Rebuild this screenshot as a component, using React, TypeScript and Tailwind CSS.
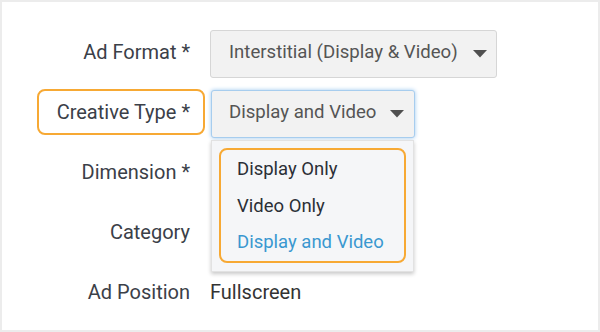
import React from 'react';

const orange = 'border-2 border-[#f7a934]';

function Caret() {
  return (
    <svg width="14" height="8" viewBox="0 0 14 8" className="shrink-0">
      <path d="M0 0 H14 L7 7.5 Z" fill="#505050" />
    </svg>
  );
}

function Label({ text, boxed }: { text: string; boxed?: boolean }) {
  return (
    <div className="relative flex h-12 items-center justify-end pb-1 text-[20px] text-[#3b4048]">
      {boxed && <span className={`absolute left-[35px] -right-[15px] -top-px h-[46px] rounded-lg ${orange}`} />}
      <span className="relative">{text}</span>
    </div>
  );
}

export default function App() {
  const options = ['Display Only', 'Video Only', 'Display and Video'];

  return (
    <div
      className="h-[332px] w-[600px] border-2 border-[#ececec] bg-white"
      style={{ fontFamily: 'Roboto, "Liberation Sans", sans-serif' }}
    >
      <div className="grid grid-cols-[188px_1fr] gap-x-5 gap-y-3 pt-7">
        <Label text="Ad Format *" />
        <div>
          <div className="flex h-12 w-[287px] items-center justify-between rounded-[3px] border border-[#d6d6d6] bg-[#f2f2f2] pl-[18px] pr-[9px] text-[18.6px] text-[#555]">
            <span className="pb-0.5">Interstitial (Display &amp; Video)</span>
            <Caret />
          </div>
        </div>

        <Label text="Creative Type *" boxed />
        <div className="relative">
          <div className="ml-px flex h-12 w-[204px] items-center justify-between rounded-[3px] border border-[#a7cdee] bg-[#f2f2f2] pl-[17px] pr-[10px] text-[18.6px] text-[#555] shadow-[0_0_4px_#9fcaf0]">
            <span className="pb-0.5">Display and Video</span>
            <Caret />
          </div>
          <div className="absolute left-px top-[50px] z-10 h-[132px] w-[203px] border border-[#e2e2e2] bg-[#f5f6f8] p-[7px] shadow-[0_2px_4px_rgba(0,0,0,0.22)]">
            <div className={`flex h-[115px] flex-col justify-between rounded-lg pb-[6px] pt-[6px] pl-4 text-[18.5px] leading-[26px] ${orange}`}>
              {options.map((o, i) => (
                <div key={o} className={i === 2 ? 'text-[#3a98d0]' : 'text-[#2b2f36]'}>
                  {o}
                </div>
              ))}
            </div>
          </div>
        </div>

        <Label text="Dimension *" />
        <div />

        <Label text="Category" />
        <div />

        <Label text="Ad Position" />
        <div className="flex h-12 items-center pb-1 text-[20px] text-[#333]">Fullscreen</div>
      </div>
    </div>
  );
}
